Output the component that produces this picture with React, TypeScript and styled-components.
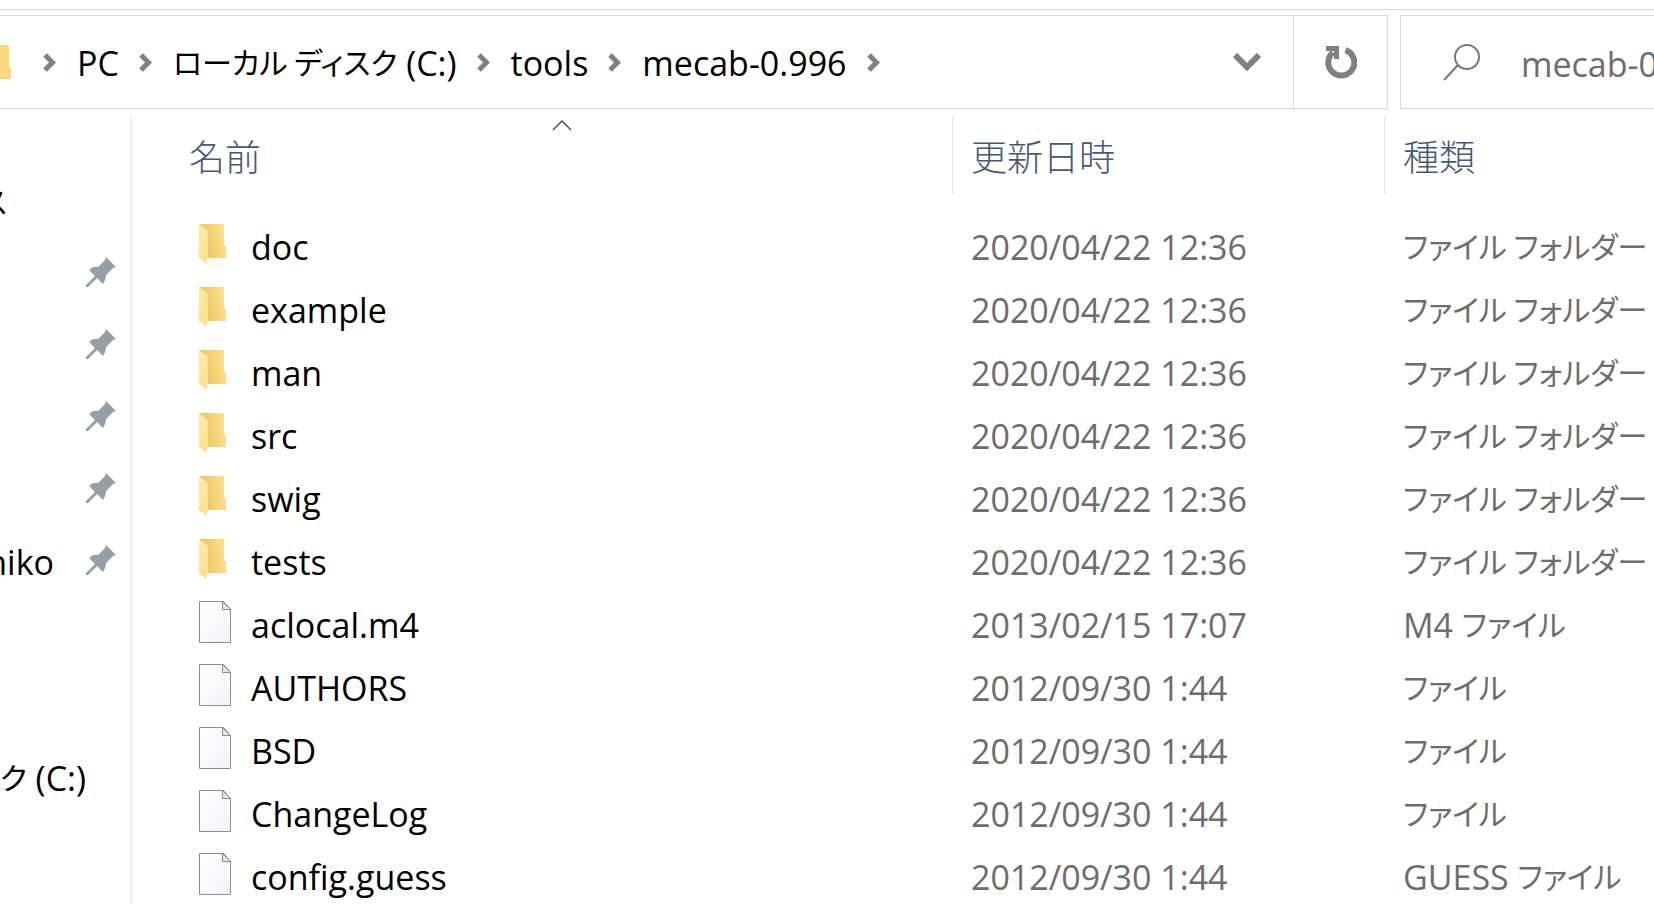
import React from "react";
import styled, { createGlobalStyle, css } from "styled-components";

const GlobalStyle = createGlobalStyle`
  * { box-sizing: border-box; }
  html, body, #root { height: 100%; }
  body {
    margin: 0;
    overflow: hidden;
    background: #fff;
    color: #000;
    font-family: "Open Sans", "Noto Sans CJK JP", sans-serif;
    font-size: 34px;
    line-height: 40px;
  }
  button, input { font: inherit; color: inherit; background: none; border: 0; padding: 0; margin: 0; }
  a { color: inherit; text-decoration: none; }
  svg { flex: none; }
`;

const Window = styled.div`
  height: 100vh;
  display: flex;
  flex-direction: column;
  overflow: hidden;
  padding-top: 9px;
`;

const NavBar = styled.header`
  display: flex;
  gap: 12px;
  height: 100px;
  flex: none;
  padding-top: 5px;
  border-top: 1px solid #d9d9d9;
`;

const AddressBar = styled.div`
  flex: 1;
  min-width: 0;
  display: flex;
  border: 1px solid #d9d9d9;
  border-left: 0;
`;

const Crumbs = styled.nav`
  flex: 1;
  min-width: 0;
  display: flex;
  align-items: center;
  white-space: nowrap;
`;

const Crumb = styled.a`
  margin: 0 20px 0 21px;
  padding-top: 2px;
`;

const Kana = styled.span`
  font-family: "Noto Sans CJK JP", sans-serif;
  font-size: 30px;
  line-height: 30px;
  vertical-align: 2px;
  font-feature-settings: "palt";
`;

const IconButton = styled.button<{ $width: number; $divided?: boolean }>`
  width: ${(p) => p.$width}px;
  display: flex;
  align-items: center;
  justify-content: center;
  ${(p) => p.$divided && css`border-left: 1px solid #d9d9d9;`}
`;

const SearchBox = styled.label`
  flex: 0 0 254px;
  min-width: 0;
  display: flex;
  align-items: center;
  padding-left: 42px;
  border: 1px solid #d9d9d9;
  border-right: 0;
`;

const SearchInput = styled.input`
  flex: 1;
  min-width: 0;
  margin-left: 41px;
  height: 60px;
  padding-top: 4px;
  outline: 0;
  &::placeholder { color: #6d6d6d; opacity: 1; }
`;

const Content = styled.div`
  flex: 1;
  min-height: 0;
  display: flex;
  padding-top: 7px;
`;

const Sidebar = styled.aside`
  flex: 0 0 133px;
  border-right: 4px solid #f5f5f5;
  padding-top: 48px;
  overflow: hidden;
`;

const SideList = styled.ul`
  list-style: none;
  margin: 0;
  padding: 0;
`;

const SideItem = styled.li<{ $end: number }>`
  height: 72px;
  display: flex;
  align-items: center;
  justify-content: flex-end;
  white-space: nowrap;
  gap: 32px;
  padding-right: ${(p) => p.$end}px;
`;

const SideLabel = styled.span`
  padding-top: 4px;
`;

const Files = styled.main`
  flex: 1;
  min-width: 0;
  overflow: hidden;
`;

const Table = styled.table`
  width: 100%;
  table-layout: fixed;
  border-collapse: separate;
  border-spacing: 0;
  white-space: nowrap;
`;

const Heading = styled.th<{ $width?: number; $first?: boolean }>`
  width: ${(p) => (p.$width ? `${p.$width}px` : "auto")};
  position: relative;
  height: 78px;
  padding: 0 0 0 ${(p) => (p.$first ? 56 : 18)}px;
  border-left: ${(p) => (p.$first ? "0" : "1px solid #e2e2e2")};
  text-align: left;
  font-weight: 300;
  font-size: 36px;
  font-family: "Noto Sans CJK JP", sans-serif;
  color: #44597a;
`;

const SortMark = styled.svg`
  position: absolute;
  top: 4px;
  left: calc(50% + 9px);
`;

const Spacer = styled.tr`
  height: 21px;
`;

const NameCell = styled.td`
  height: 63px;
  padding: 0 0 0 66px;
`;

const FileName = styled.a`
  display: flex;
  align-items: center;
  gap: 19px;
  svg { margin-bottom: 6px; }
`;

const InfoCell = styled.td`
  padding: 0 0 0 19px;
  color: #6d6d6d;
`;

const CrumbArrow = () => (
  <svg width="13" height="19" viewBox="0 0 13 19" aria-hidden="true">
    <path d="M2 2 L9.500 9.500 L2 17" fill="none" stroke="#808080" strokeWidth="5" />
  </svg>
);

const FolderIcon = () => (
  <svg width="33" height="42" viewBox="0 -1 33 42" aria-hidden="true">
    <defs>
      <linearGradient id="back" x1="0" y1="0.600" x2="1" y2="0.400">
        <stop offset="0.200" stopColor="#ecc864" />
        <stop offset="1" stopColor="#fde08a" />
      </linearGradient>
      <linearGradient id="flap" x1="0" y1="0" x2="0" y2="1">
        <stop offset="0" stopColor="#ffe9a6" />
        <stop offset="1" stopColor="#fddf8b" />
      </linearGradient>
    </defs>
    <path d="M8 35 H28 L30 33 L10 37Z" fill="#f3f3f3" />
    <path d="M0 0 H25 V21 L27 23 V34 H8 V30Z" fill="url(#back)" />
    <path d="M0 0 L9 7 V34 L8 35 V40 L0 34Z" fill="url(#flap)" />
  </svg>
);

const FileIcon = () => (
  <svg width="33" height="42" viewBox="0 0 33 42" aria-hidden="true">
    <defs>
      <linearGradient id="sheet" x1="0" y1="0" x2="1" y2="1">
        <stop offset="0" stopColor="#ffffff" />
        <stop offset="1" stopColor="#f1f3f6" />
      </linearGradient>
    </defs>
    <path d="M0.500 0.500 H24.500 L31.500 8.500 V41.500 H0.500Z" fill="url(#sheet)" stroke="#8c8c8c" />
    <path d="M23.500 0.500 V8.500 H31.500Z" fill="#e6e6e6" stroke="#8c8c8c" />
  </svg>
);

const PinIcon = () => (
  <svg width="30" height="30" viewBox="0 0 30 30" aria-hidden="true">
    <path
      d="M20 0 L30 10 L27 11 L20 18 Q20 23 17 27 L11 21 L2 30 H0 V28 L9 19 L3 13 Q7 9 12 10 L19 3Z"
      fill="#959fa5"
    />
  </svg>
);

const CrumbFolder = () => (
  <svg width="12" height="34" viewBox="0 0 12 34" aria-hidden="true">
    <path d="M0 0 H9 V21 L11 23 V34 H0Z" fill="#fad97d" />
  </svg>
);

const sideItems: { label?: React.ReactNode; pinned?: boolean; end: number }[] = [
  { label: <Kana>ス</Kana>, end: 122 },
  { pinned: true, end: 13 },
  { pinned: true, end: 13 },
  { pinned: true, end: 13 },
  { pinned: true, end: 13 },
  { label: "niko", pinned: true, end: 13 },
  { end: 13 },
  { end: 13 },
  { label: <><Kana>ク</Kana> (C:)</>, end: 43 },
];

const folderType = <Kana>ファイル フォルダー</Kana>;
const fileType = <Kana>ファイル</Kana>;

const files: { name: string; date: string; type: React.ReactNode; folder?: boolean }[] = [
  ...["doc", "example", "man", "src", "swig", "tests"].map((name) => ({
    name,
    date: "2020/04/22 12:36",
    type: folderType,
    folder: true,
  })),
  { name: "aclocal.m4", date: "2013/02/15 17:07", type: <>M4 {fileType}</> },
  { name: "AUTHORS", date: "2012/09/30 1:44", type: fileType },
  { name: "BSD", date: "2012/09/30 1:44", type: fileType },
  { name: "ChangeLog", date: "2012/09/30 1:44", type: fileType },
  { name: "config.guess", date: "2012/09/30 1:44", type: <>GUESS {fileType}</> },
];

const crumbs: React.ReactNode[] = [
  "PC",
  <><Kana>ローカル ディスク</Kana> (C:)</>,
  "tools",
  "mecab-0.996",
];

const Lead = styled.span`
  display: flex;
  margin-right: 31px;
`;

export default function App() {
  return (
    <Window>
      <GlobalStyle />
      <NavBar>
        <AddressBar>
          <Crumbs>
            <Lead><CrumbFolder /></Lead>
            <CrumbArrow />
            {crumbs.map((c, i) => (
              <React.Fragment key={i}>
                <Crumb href="#">{c}</Crumb>
                <CrumbArrow />
              </React.Fragment>
            ))}
          </Crumbs>
          <IconButton $width={92} aria-label="履歴">
            <svg width="28" height="18" viewBox="0 0 28 18" aria-hidden="true">
              <path d="M2 2 L14 14 L26 2" fill="none" stroke="#808080" strokeWidth="6" />
            </svg>
          </IconButton>
          <IconButton $width={94} $divided aria-label="更新">
            <svg width="32" height="33" viewBox="0 0 32 33" aria-hidden="true">
              <path d="M20.500 4.200 A13 13 0 1 1 8 6.500" fill="none" stroke="#808080" strokeWidth="6" />
              <path d="M1 0 H14 V13 H9 V5 H1Z" fill="#808080" />
            </svg>
          </IconButton>
        </AddressBar>
        <SearchBox>
          <svg width="37" height="37" viewBox="0 0 37 37" aria-hidden="true">
            <circle cx="24" cy="13" r="12" fill="none" stroke="#777" strokeWidth="2" />
            <path d="M15 21 L1 36" stroke="#777" strokeWidth="2" />
          </svg>
          <SearchInput type="text" placeholder="mecab-0.996" aria-label="検索" />
        </SearchBox>
      </NavBar>
      <Content>
        <Sidebar>
          <SideList>
            {sideItems.map((s, i) => (
              <SideItem key={i} $end={s.end}>
                {s.label && <SideLabel>{s.label}</SideLabel>}
                {s.pinned && <PinIcon />}
              </SideItem>
            ))}
          </SideList>
        </Sidebar>
        <Files>
          <Table>
            <thead>
              <tr>
                <Heading $first>
                  名前
                  <SortMark width="20" height="11" viewBox="0 0 20 11" aria-hidden="true">
                    <path d="M1 10 L10 1 L19 10" fill="none" stroke="#444" strokeWidth="1.300" />
                  </SortMark>
                </Heading>
                <Heading $width={432}>更新日時</Heading>
                <Heading $width={270}>種類</Heading>
              </tr>
            </thead>
            <tbody>
              <Spacer />
              {files.map((f) => (
                <tr key={f.name}>
                  <NameCell>
                    <FileName href="#">
                      {f.folder ? <FolderIcon /> : <FileIcon />}
                      {f.name}
                    </FileName>
                  </NameCell>
                  <InfoCell>{f.date}</InfoCell>
                  <InfoCell>{f.type}</InfoCell>
                </tr>
              ))}
            </tbody>
          </Table>
        </Files>
      </Content>
    </Window>
  );
}
